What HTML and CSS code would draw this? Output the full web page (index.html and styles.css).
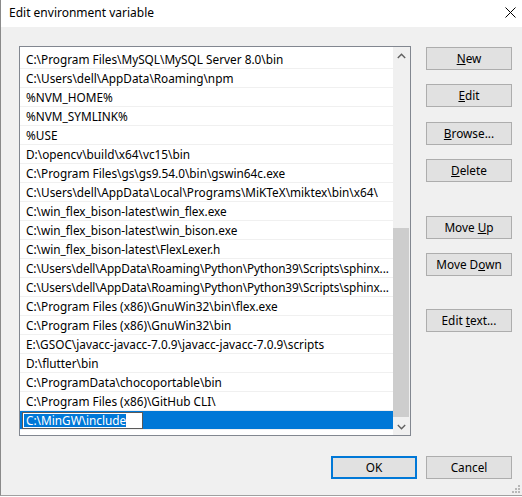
FILE: index.html
```html
<!DOCTYPE html>
<html>
<head>
<meta charset="utf-8">
<link rel="stylesheet" href="styles.css">
</head>
<body>
<div class="window">
  <div class="titlebar">
    <span class="title">Edit environment variable</span>
    <svg class="close" width="11" height="11" viewBox="0 0 11 11"><path d="M0.5 0.5 L10.5 10.5 M10.5 0.5 L0.5 10.5" stroke="#000" stroke-width="1" fill="none"/></svg>
  </div>
  <div class="main">
    <div class="list">
      <div class="rows">
        <div class="row">C:\Program Files\MySQL\MySQL Server 8.0\bin</div>
        <div class="row">C:\Users\dell\AppData\Roaming\npm</div>
        <div class="row">%NVM_HOME%</div>
        <div class="row">%NVM_SYMLINK%</div>
        <div class="row">%USE</div>
        <div class="row">D:\opencv\build\x64\vc15\bin</div>
        <div class="row">C:\Program Files\gs\gs9.54.0\bin\gswin64c.exe</div>
        <div class="row">C:\Users\dell\AppData\Local\Programs\MiKTeX\miktex\bin\x64\</div>
        <div class="row">C:\win_flex_bison-latest\win_flex.exe</div>
        <div class="row">C:\win_flex_bison-latest\win_bison.exe</div>
        <div class="row">C:\win_flex_bison-latest\FlexLexer.h</div>
        <div class="row tight">C:\Users\dell\AppData\Roaming\Python\Python39\Scripts\sphinx...</div>
        <div class="row tight">C:\Users\dell\AppData\Roaming\Python\Python39\Scripts\sphinx...</div>
        <div class="row">C:\Program Files (x86)\GnuWin32\bin\flex.exe</div>
        <div class="row">C:\Program Files (x86)\GnuWin32\bin</div>
        <div class="row">E:\GSOC\javacc-javacc-7.0.9\javacc-javacc-7.0.9\scripts</div>
        <div class="row">D:\flutter\bin</div>
        <div class="row">C:\ProgramData\chocoportable\bin</div>
        <div class="row">C:\Program Files (x86)\GitHub CLI\</div>
        <div class="row sel"><span class="editbox"><span class="seltext">C:\MinGW\include</span></span></div>
      </div>
      <div class="scrollbar">
        <div class="arrow"><svg width="9" height="6" viewBox="0 0 9 6"><path d="M0.8 5 L4.5 1.3 L8.2 5" stroke="#606060" stroke-width="1.4" fill="none"/></svg></div>
        <div class="track"><div class="thumb"></div></div>
        <div class="arrow"><svg width="9" height="6" viewBox="0 0 9 6"><path d="M0.8 1 L4.5 4.7 L8.2 1" stroke="#606060" stroke-width="1.4" fill="none"/></svg></div>
      </div>
    </div>
    <div class="side">
      <button class="btn b-new"><u>N</u>ew</button>
      <button class="btn b-edit"><u>E</u>dit</button>
      <button class="btn b-browse"><u>B</u>rowse...</button>
      <button class="btn b-delete"><u>D</u>elete</button>
      <button class="btn b-up">Move <u>U</u>p</button>
      <button class="btn b-down">Move D<u>o</u>wn</button>
      <button class="btn b-text">Edit <u>t</u>ext...</button>
    </div>
  </div>
  <div class="footer">
    <button class="btn ok">OK</button>
    <button class="btn">Cancel</button>
  </div>
  <svg class="grip" width="8" height="8" viewBox="0 0 8 8">
    <rect x="6" y="0" width="2" height="2" fill="#b8b8b8"/>
    <rect x="3" y="3" width="2" height="2" fill="#b8b8b8"/>
    <rect x="6" y="3" width="2" height="2" fill="#b8b8b8"/>
    <rect x="0" y="6" width="2" height="2" fill="#b8b8b8"/>
    <rect x="3" y="6" width="2" height="2" fill="#b8b8b8"/>
    <rect x="6" y="6" width="2" height="2" fill="#b8b8b8"/>
  </svg>
</div>
</body>
</html>
```
FILE: styles.css
```css
html, body {
  margin: 0;
  padding: 0;
}
body {
  width: 522px;
  height: 497px;
  overflow: hidden;
  background: #ffffff;
  font-family: "Noto Sans", "Open Sans", sans-serif;
  font-size: 12px;
  color: #000;
}
.window {
  position: relative;
  box-sizing: border-box;
  width: 522px;
  height: 496px;
  background: #f0f0f0;
  border-left: 1px solid #8a8a8a;
  border-bottom: 1px solid #a0a0a0;
}
.titlebar {
  height: 27px;
  background: #fff;
  display: flex;
  align-items: center;
  justify-content: space-between;
  padding: 0 6px 0 8px;
  box-sizing: border-box;
}
.title {
  font-size: 12px;
  line-height: 14px;
  margin-top: -2px;
}
.close {
  margin-top: -3px;
}
.main {
  display: flex;
  align-items: flex-start;
  padding: 19px 0 0 18px;
}
.list {
  box-sizing: border-box;
  width: 392px;
  height: 390px;
  border: 1px solid #828790;
  background: #fff;
  display: flex;
}
.rows {
  flex: 1;
  min-width: 0;
  padding-top: 3px;
  overflow: hidden;
}
.row {
  height: 18px;
  line-height: 18px;
  font-size: 11.8px;
  border-bottom: 1px solid #f0f0f0;
  padding: 0 2px 0 6px;
  white-space: nowrap;
  overflow: hidden;
}
.row.tight {
  letter-spacing: -0.12px;
}
.row.sel {
  background: #0078d7;
  padding-left: 2px;
  display: flex;
  align-items: center;
}
.editbox {
  box-sizing: border-box;
  display: flex;
  align-items: center;
  width: 121px;
  height: 17px;
  background: #fff;
  border: 1px solid #5a5a5a;
  padding: 1px;
}
.seltext {
  background: #0078d7;
  color: #fff;
  line-height: 13px;
  padding-left: 2px;
}
.scrollbar {
  width: 17px;
  display: flex;
  flex-direction: column;
  background: #f0f0f0;
}
.arrow {
  height: 17px;
  display: flex;
  align-items: center;
  justify-content: center;
}
.track {
  flex: 1;
  display: flex;
  flex-direction: column;
}
.thumb {
  margin: 164px 1px 0 0;
  height: 189px;
  background: #cdcdcd;
}
.side {
  display: flex;
  flex-direction: column;
  margin-left: 15px;
  padding-top: 1px;
}
.btn {
  box-sizing: border-box;
  width: 86px;
  height: 23px;
  margin: 0;
  padding: 0;
  background: #e1e1e1;
  border: 1px solid #adadad;
  font-family: "Noto Sans", "Open Sans", sans-serif;
  font-size: 11.8px;
  color: #000;
  line-height: 19px;
  white-space: nowrap;
}
.b-edit { margin-top: 14px; }
.b-browse { margin-top: 15px; }
.b-delete { margin-top: 14px; }
.b-up { margin-top: 34px; }
.b-down { margin-top: 14px; }
.b-text { margin-top: 33px; }
.footer {
  display: flex;
  justify-content: flex-end;
  gap: 9px;
  padding: 20px 10px 0 0;
}
.ok {
  border: 1px solid #0078d7;
  box-shadow: inset 0 0 0 1px #0078d7;
}
.grip {
  position: absolute;
  right: 2px;
  bottom: 2px;
}
```
